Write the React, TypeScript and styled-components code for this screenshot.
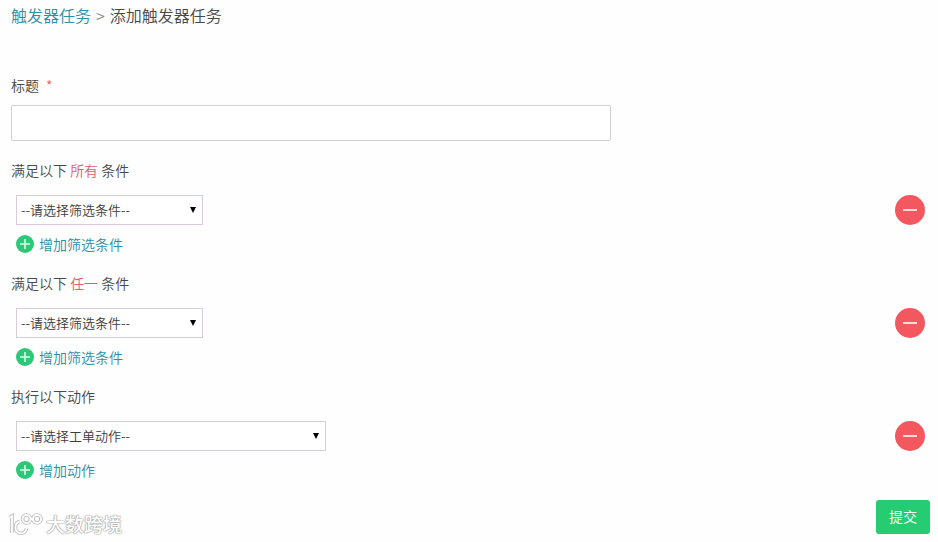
import React, { useId } from "react";
import styled, { createGlobalStyle } from "styled-components";

const GlobalStyle = createGlobalStyle`
  *, *::before, *::after { box-sizing: border-box; }
  body {
    margin: 0;
    background: #fefefe;
    color: #484848;
    font: 350 14px/20px "Noto Sans CJK SC", sans-serif;
  }
  button, input, select { font: inherit; color: inherit; margin: 0; }
`;

const Page = styled.main`
  position: relative;
  padding: 3px 8px 8px 11px;
`;

const Breadcrumb = styled.nav`
  display: flex;
  gap: 5px;
  margin-bottom: 48px;
  font-size: 16px;
  line-height: 24px;
`;

const Crumb = styled.a`
  color: #2a8fa8;
  text-decoration: none;
`;

const Separator = styled.span`
  color: #888;
`;

const Form = styled.form`
  display: flex;
  flex-direction: column;
  gap: 19px;
`;

const Field = styled.div`
  display: flex;
  flex-direction: column;
  gap: 10px;
`;

const Required = styled.span`
  margin-left: 7px;
  color: #e8606a;
`;

const TextInput = styled.input`
  width: 100%;
  max-width: 600px;
  height: 36px;
  padding: 0 10px;
  border: 1px solid #d2d0d2;
  border-radius: 2px;
  background: #fff;
`;

const Group = styled.section`
  display: flex;
  flex-direction: column;
`;

const GroupTitle = styled.h2`
  margin: 0 0 15px;
  font: inherit;
`;

const Accent = styled.span`
  color: #e85a68;
`;

const Row = styled.div`
  display: flex;
  align-items: center;
  justify-content: space-between;
  padding: 0 5px;
  margin-bottom: 9px;
`;

const SelectBox = styled.div<{ $width: number }>`
  position: relative;
  width: ${(p) => p.$width}px;
`;

const Select = styled.select`
  appearance: none;
  display: block;
  width: 100%;
  height: 30px;
  padding: 0 20px 0 4px;
  border: 1px solid #d6cdd6;
  border-radius: 0;
  background: #fff;
  color: #3c3c3c;
  font-size: 13px;
`;

const Arrow = styled.svg`
  position: absolute;
  top: 12px;
  right: 7px;
  pointer-events: none;
`;

const RemoveButton = styled.button`
  width: 30px;
  height: 30px;
  padding: 0;
  border: 0;
  border-radius: 50%;
  background: #f4585f;
  cursor: pointer;

  svg { display: block; }
`;

const AddButton = styled.button`
  display: flex;
  align-items: center;
  align-self: flex-start;
  gap: 5px;
  height: 20px;
  margin-left: 5px;
  padding: 0;
  border: 0;
  background: none;
  color: #2a8fa8;
  cursor: pointer;
`;

const SubmitButton = styled.button`
  align-self: flex-end;
  height: 34px;
  margin-top: 1px;
  padding: 0 13px 2px;
  border: 0;
  border-radius: 3px;
  background: #26cc72;
  color: #fff;
  cursor: pointer;
`;

const Watermark = styled.div`
  position: absolute;
  left: 8px;
  bottom: 6px;
  display: flex;
  align-items: center;
  gap: 3px;
  color: #fff;
  font-size: 19px;
  font-weight: 500;
  line-height: 24px;
  text-shadow: 0 0 1px #999, 0 0 1px #999, 0 0 2px #aaa;
  pointer-events: none;
`;

function PlusIcon() {
  return (
    <svg width="18" height="18" viewBox="0 0 18 18" aria-hidden="true">
      <circle cx="9" cy="9" r="9" fill="#2bc878" />
      <path d="M9 4v10M4 9h10" stroke="#dcffeb" strokeWidth="1.600" />
    </svg>
  );
}

function MinusIcon() {
  return (
    <svg width="30" height="30" viewBox="0 0 30 30" aria-hidden="true">
      <path d="M8 15h14" stroke="#ffdcdc" strokeWidth="2" />
    </svg>
  );
}

function WatermarkLogo() {
  const shape = (
    <>
      <path d="M1.500 5.500L4 4v17" />
      <path d="M12 9.500C9 10 7.500 12 7.500 15a5.500 5.500 0 0 0 11 1.500" />
      <circle cx="18.500" cy="7" r="4" />
      <circle cx="29" cy="7" r="4" />
      <path d="M22 5.500l3.500 3" />
    </>
  );
  return (
    <svg width="35" height="24" viewBox="0 0 35 24" fill="none" aria-hidden="true">
      <g stroke="#bdbdbd" strokeWidth="3.600">{shape}</g>
      <g stroke="#fff" strokeWidth="1.800">{shape}</g>
    </svg>
  );
}

interface RuleGroupProps {
  title: React.ReactNode;
  placeholder: string;
  addLabel: string;
  selectWidth: number;
}

function RuleGroup({ title, placeholder, addLabel, selectWidth }: RuleGroupProps) {
  const id = useId();
  return (
    <Group>
      <GroupTitle id={id}>{title}</GroupTitle>
      <Row>
        <SelectBox $width={selectWidth}>
          <Select aria-labelledby={id}>
            <option>{placeholder}</option>
          </Select>
          <Arrow width="6" height="6" viewBox="0 0 6 6" aria-hidden="true">
            <path d="M0 0h6L3 6z" fill="#000" />
          </Arrow>
        </SelectBox>
        <RemoveButton type="button" aria-label="删除">
          <MinusIcon />
        </RemoveButton>
      </Row>
      <AddButton type="button">
        <PlusIcon />
        {addLabel}
      </AddButton>
    </Group>
  );
}

export default function App() {
  return (
    <>
      <GlobalStyle />
      <Page>
        <Breadcrumb>
          <Crumb href="#">触发器任务</Crumb>
          <Separator>&gt;</Separator>
          <span>添加触发器任务</span>
        </Breadcrumb>
        <Form onSubmit={(e) => e.preventDefault()}>
          <Field>
            <label htmlFor="title">
              标题<Required>*</Required>
            </label>
            <TextInput id="title" type="text" />
          </Field>
          <RuleGroup
            title={<>满足以下 <Accent>所有</Accent> 条件</>}
            placeholder="--请选择筛选条件--"
            addLabel="增加筛选条件"
            selectWidth={187}
          />
          <RuleGroup
            title={<>满足以下 <Accent>任一</Accent> 条件</>}
            placeholder="--请选择筛选条件--"
            addLabel="增加筛选条件"
            selectWidth={187}
          />
          <RuleGroup
            title="执行以下动作"
            placeholder="--请选择工单动作--"
            addLabel="增加动作"
            selectWidth={310}
          />
          <SubmitButton type="submit">提交</SubmitButton>
        </Form>
        <Watermark>
          <WatermarkLogo />
          大数跨境
        </Watermark>
      </Page>
    </>
  );
}
